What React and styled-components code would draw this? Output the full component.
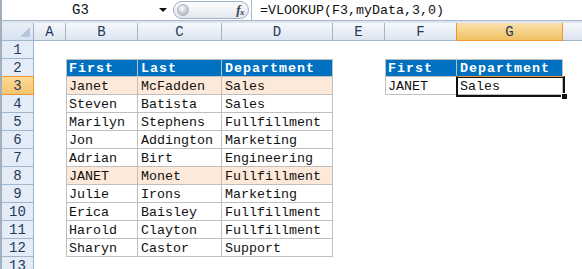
import React from "react";
import styled, { createGlobalStyle, css } from "styled-components";

const Global = createGlobalStyle`
  html, body { margin: 0; padding: 0; background: #fff; }
  body { width: 582px; height: 269px; overflow: hidden; }
`;

const MONO = `"Liberation Mono", "DejaVu Sans Mono", monospace`;

const Window = styled.div`
  width: 582px;
  height: 269px;
  box-sizing: border-box;
  border-left: 2px solid #a4afbd;
  overflow: hidden;
  background: #fff;
  font-family: ${MONO};
`;

const FormulaBar = styled.div`
  display: flex;
  align-items: stretch;
  height: 20px;
  background: #fff;
  border-bottom: 1px solid #a9b8cc;
`;

const NameBox = styled.div`
  width: 153px;
  display: flex;
  align-items: center;
  justify-content: center;
  font-size: 14px;
  color: #111;
  padding-left: 4px;
  box-sizing: border-box;
`;

const DropArrow = styled.div`
  width: 16px;
  display: flex;
  align-items: center;
  justify-content: center;
  &::after {
    content: "";
    border-left: 4px solid transparent;
    border-right: 4px solid transparent;
    border-top: 4px solid #111;
  }
`;

const Pill = styled.div`
  margin: 1px 0 1px 2px;
  width: 76px;
  box-sizing: border-box;
  border: 1px solid #9fb0c6;
  border-radius: 9px;
  background: linear-gradient(#fbfcfd, #e3e8ef);
  display: flex;
  align-items: center;
  justify-content: space-between;
  padding: 0 4px 0 3px;
`;

const Knob = styled.div`
  width: 12px;
  height: 12px;
  border-radius: 50%;
  background: radial-gradient(circle at 40% 35%, #fdfdfd, #b7bcc3 70%, #9ea5ad);
  border: 1px solid #b0b8c3;
  box-sizing: border-box;
`;

const Fx = styled.span`
  font-family: "Liberation Serif", "DejaVu Serif", serif;
  font-style: italic;
  font-weight: bold;
  font-size: 13px;
  color: #3a4450;
  letter-spacing: -0.5px;
  & > sub { font-size: 9px; vertical-align: -1px; }
`;

const FormulaInput = styled.div`
  flex: 1;
  margin-left: 2px;
  border-left: 1px solid #a9b8cc;
  display: flex;
  align-items: center;
  padding-left: 8px;
  font-size: 13.33px;
  color: #111;
  white-space: pre;
`;

const Gap = styled.div`
  height: 2px;
  background: #dde5ef;
`;

const Sheet = styled.div`
  display: grid;
  grid-template-columns: 32px 32px 72px 84px 111px 52px 72px 106px 19px;
  grid-auto-rows: 18px;
`;

const headerBase = css`
  box-sizing: border-box;
  display: flex;
  align-items: center;
  justify-content: center;
  font-size: 14px;
  color: #1f3a5c;
  font-family: ${MONO};
`;

const Corner = styled.div`
  ${headerBase};
  position: relative;
  background: linear-gradient(#e9eff7, #d7e2f0);
  border-right: 1px solid #9eb6ce;
  border-bottom: 1px solid #9eb6ce;
  & > svg { position: absolute; right: 3px; bottom: 3px; }
`;

const ColHeader = styled.div`
  ${headerBase};
  background: ${(p) =>
    p.$selected
      ? "linear-gradient(#fae1ae, #f1c162)"
      : "linear-gradient(#f5f8fc, #dce5f0)"};
  border-right: ${(p) => (p.$open ? "0" : `1px solid ${p.$selected ? "#f29536" : "#9eb6ce"}`)};
  border-bottom: 1px solid ${(p) => (p.$selected ? "#f29536" : "#9eb6ce")};
  ${(p) => p.$selected && "border-left: 1px solid #f29536; margin-left: -1px;"}
`;

const RowHeader = styled.div`
  ${headerBase};
  background: ${(p) => (p.$selected ? "linear-gradient(#fbd995, #f6c56e)" : "#e4ecf7")};
  border-right: 1px solid ${(p) => (p.$selected ? "#f29536" : "#9eb6ce")};
  border-bottom: 1px solid ${(p) => (p.$selected ? "#f29536" : "#9eb6ce")};
  ${(p) => p.$selected && "border-top: 1px solid #f29536; margin-top: -1px;"}
`;

const kindStyles = {
  blank: css`background: #fff;`,
  head: css`
    background: #0070c0;
    color: #fff;
    font-weight: bold;
    letter-spacing: 1px;
  `,
  hi: css`background: #fde9d9; color: #111;`,
  plain: css`background: #fff; color: #111;`,
};

const Cell = styled.div`
  position: relative;
  z-index: ${(p) => (p.$active ? 2 : 0)};
  box-sizing: border-box;
  display: flex;
  align-items: center;
  padding: 1px 0 0 3px;
  font-size: 13.33px;
  white-space: nowrap;
  ${(p) => kindStyles[p.$kind]};
  ${(p) =>
    p.$kind !== "blank" &&
    css`
      box-shadow: inset -1px -1px 0 #bfbfbf
        ${p.$left ? ", inset 1px 0 0 #bfbfbf" : ""}
        ${p.$top ? ", inset 0 1px 0 #bfbfbf" : ""};
    `}
`;

const Selection = styled.div`
  position: absolute;
  left: -1px;
  top: -1px;
  right: -2px;
  bottom: -2px;
  border: 2px solid #111;
  border-top: 1px solid #f39a3e;
  box-shadow: inset 0 1px 0 #111;
  pointer-events: none;
`;

const FillHandle = styled.div`
  position: absolute;
  right: -5px;
  bottom: -5px;
  width: 5px;
  height: 5px;
  background: #111;
  border: 1px solid #fff;
`;

const COLS = ["A", "B", "C", "D", "E", "F", "G", "H"];
// Column H is only partly visible; its letter lies beyond the window edge.
const VISIBLE_LABEL = { H: "" };

const leftTable = [
  ["First", "Last", "Department"],
  ["Janet", "McFadden", "Sales"],
  ["Steven", "Batista", "Sales"],
  ["Marilyn", "Stephens", "Fullfillment"],
  ["Jon", "Addington", "Marketing"],
  ["Adrian", "Birt", "Engineering"],
  ["JANET", "Monet", "Fullfillment"],
  ["Julie", "Irons", "Marketing"],
  ["Erica", "Baisley", "Fullfillment"],
  ["Harold", "Clayton", "Fullfillment"],
  ["Sharyn", "Castor", "Support"],
];

const rightTable = [
  ["First", "Department"],
  ["JANET", "Sales"],
];

function cellInfo(row, ci) {
  if (row >= 2 && row <= 12 && ci >= 1 && ci <= 3) {
    const r = row - 2;
    const kind = r === 0 ? "head" : r === 1 || r === 6 ? "hi" : "plain";
    return { kind, text: leftTable[r][ci - 1], left: ci === 1, top: r === 0 };
  }
  if (row >= 2 && row <= 3 && ci >= 5 && ci <= 6) {
    const r = row - 2;
    return {
      kind: r === 0 ? "head" : "plain",
      text: rightTable[r][ci - 5],
      left: ci === 5,
      top: r === 0,
      active: row === 3 && ci === 6,
    };
  }
  return { kind: "blank", text: "" };
}

export default function App() {
  const rows = Array.from({ length: 12 }, (_, i) => i + 1);
  return (
    <>
      <Global />
      <Window>
        <FormulaBar>
          <NameBox>G3</NameBox>
          <DropArrow />
          <Pill>
            <Knob />
            <Fx>
              f<sub>x</sub>
            </Fx>
          </Pill>
          <FormulaInput>=VLOOKUP(F3,myData,3,0)</FormulaInput>
        </FormulaBar>
        <Gap />
        <Sheet>
          <Corner>
            <svg width="10" height="10" viewBox="0 0 10 10">
              <polygon points="10,0 10,10 0,10" fill="#b4c7e0" />
            </svg>
          </Corner>
          {COLS.map((c) => (
            <ColHeader key={c} $selected={c === "G"} $open={c === "H"}>
              {c in VISIBLE_LABEL ? VISIBLE_LABEL[c] : c}
            </ColHeader>
          ))}
          {rows.map((row) => (
            <React.Fragment key={row}>
              <RowHeader $selected={row === 3}>{row}</RowHeader>
              {COLS.map((c, ci) => {
                const info = cellInfo(row, ci);
                return (
                  <Cell
                    key={c}
                    $kind={info.kind}
                    $left={info.left}
                    $top={info.top}
                    $active={info.active}
                  >
                    {info.text}
                    {info.active && (
                      <Selection>
                        <FillHandle />
                      </Selection>
                    )}
                  </Cell>
                );
              })}
            </React.Fragment>
          ))}
          <RowHeader>13</RowHeader>
        </Sheet>
      </Window>
    </>
  );
}
